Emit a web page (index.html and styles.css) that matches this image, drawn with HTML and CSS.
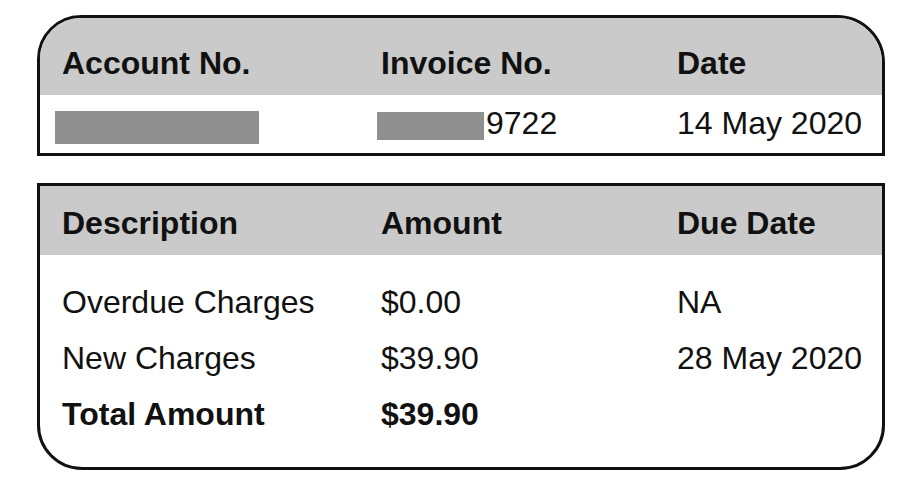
FILE: index.html
```html
<!DOCTYPE html>
<html lang="en">
<head>
<meta charset="utf-8">
<title>Invoice summary</title>
<link rel="stylesheet" href="styles.css">
</head>
<body>
<main class="page">
  <section class="box box-top">
    <div class="grid head head-top">
      <div>Account No.</div>
      <div>Invoice No.</div>
      <div>Date</div>
    </div>
    <div class="grid row-top">
      <div><span class="redact redact-acct"></span></div>
      <div><span class="redact redact-inv"></span><span class="inv-tail">9722</span></div>
      <div>14 May 2020</div>
    </div>
  </section>

  <section class="box box-bottom">
    <div class="grid head head-bottom">
      <div>Description</div>
      <div>Amount</div>
      <div>Due Date</div>
    </div>
    <div class="body">
      <div class="grid line">
        <div>Overdue Charges</div>
        <div>$0.00</div>
        <div>NA</div>
      </div>
      <div class="grid line">
        <div>New Charges</div>
        <div>$39.90</div>
        <div>28 May 2020</div>
      </div>
      <div class="grid line total">
        <div>Total Amount</div>
        <div>$39.90</div>
        <div></div>
      </div>
    </div>
  </section>
</main>
</body>
</html>
```

FILE: styles.css
```css
html, body {
  margin: 0;
  padding: 0;
  background: #ffffff;
}

body {
  font-family: "Liberation Sans", Arial, Helvetica, sans-serif;
  font-size: 32px;
  color: #111111;
  letter-spacing: 0;
}

.page {
  padding: 15px 0 0 37px;
  width: 848px;
}

.box {
  border: 3px solid #111111;
  overflow: hidden;
  background: #ffffff;
}

.box-top {
  border-radius: 44px 48px 0 0;
}

.box-bottom {
  margin-top: 27px;
  border-radius: 0 0 45px 45px;
}

.grid {
  display: grid;
  grid-template-columns: 319px 296px 1fr;
  padding-left: 22px;
}

.head {
  background: #cacaca;
  font-weight: bold;
  line-height: 34px;
}

.head-top {
  padding-top: 28px;
  padding-bottom: 15px;
}

.row-top {
  line-height: 34px;
  height: 34px;
  padding-top: 11px;
  padding-bottom: 13px;
  white-space: nowrap;
}

.head-bottom {
  padding-top: 20px;
  padding-bottom: 15px;
}

.body {
  padding-top: 19px;
  padding-bottom: 25px;
}

.line {
  line-height: 56px;
  white-space: nowrap;
}

.total {
  font-weight: bold;
}

.redact {
  display: inline-block;
  background: #8f8f8f;
}

.redact-acct {
  width: 204px;
  height: 33px;
  margin-left: -7px;
  vertical-align: -10px;
}

.redact-inv {
  width: 107px;
  height: 28px;
  margin-left: -4px;
  vertical-align: -6px;
}

.inv-tail {
  margin-left: 2px;
}
```
